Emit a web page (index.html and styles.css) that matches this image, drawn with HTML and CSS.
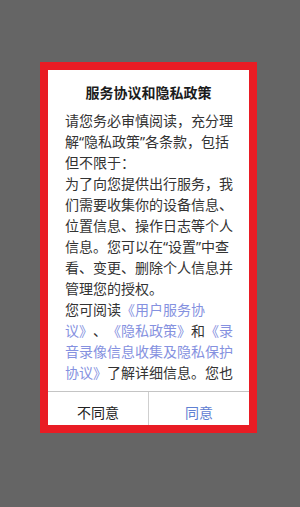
FILE: index.html
```html
<!DOCTYPE html>
<html lang="zh-CN">
<head>
<meta charset="utf-8">
<title>服务协议和隐私政策</title>
<link rel="stylesheet" href="styles.css">
</head>
<body>
<div class="frame">
  <div class="dialog">
    <div class="title">服务协议和隐私政策</div>
    <div class="content">
      <p>请您务必审慎阅读，充分理解“隐私政策”各条款，包括但不限于：</p>
      <p>为了向您提供出行服务，我们需要收集你的设备信息、位置信息、操作日志等个人信息。您可以在“设置”中查看、变更、删除个人信息并管理您的授权。</p>
      <p>您可阅读<span class="link">《用户服务协议》</span>、<span class="link">《隐私政策》</span>和<span class="link">《录音录像信息收集及隐私保护协议》</span>了解详细信息。您也可以随时联系我们的客服进行咨询，我们将尽快为您处理。</p>
    </div>
    <div class="actions">
      <div class="btn btn-cancel">不同意</div>
      <div class="btn btn-ok">同意</div>
    </div>
  </div>
</div>
</body>
</html>
```
FILE: styles.css
```css
html, body {
  margin: 0;
  padding: 0;
}
body {
  background: #656565;
  height: 507px;
  overflow: hidden;
  font-family: "Noto Sans", "Noto Sans CJK SC", sans-serif;
  text-spacing-trim: space-all;
}
.frame {
  margin: 62px 0 0 40px;
  width: 201px;
  border: 8px solid #e91c24;
  background: #fff;
}
.dialog {
  display: flex;
  flex-direction: column;
}
.title {
  padding-top: 13px;
  line-height: 20px;
  font-size: 14px;
  font-weight: 700;
  color: #1c1c1c;
  text-align: center;
}
.content {
  margin-top: 7px;
  margin-bottom: 8px;
  height: 273px;
  overflow: hidden;
  padding: 0 14px 0 17px;
  font-size: 14px;
  line-height: 21px;
  color: #333;
  text-spacing-trim: space-all;
}
.content p {
  margin: 0;
}
.link {
  color: #8591e0;
}
.actions {
  display: flex;
  border-top: 1px solid #c4c4c4;
  height: 33px;
}
.btn {
  flex: 1;
  text-align: center;
  font-size: 14px;
  line-height: 20px;
  padding-top: 11px;
  box-sizing: border-box;
}
.btn-cancel {
  color: #222;
  border-right: 1px solid #cfcfcf;
}
.btn-ok {
  color: #5f80d2;
}
```
